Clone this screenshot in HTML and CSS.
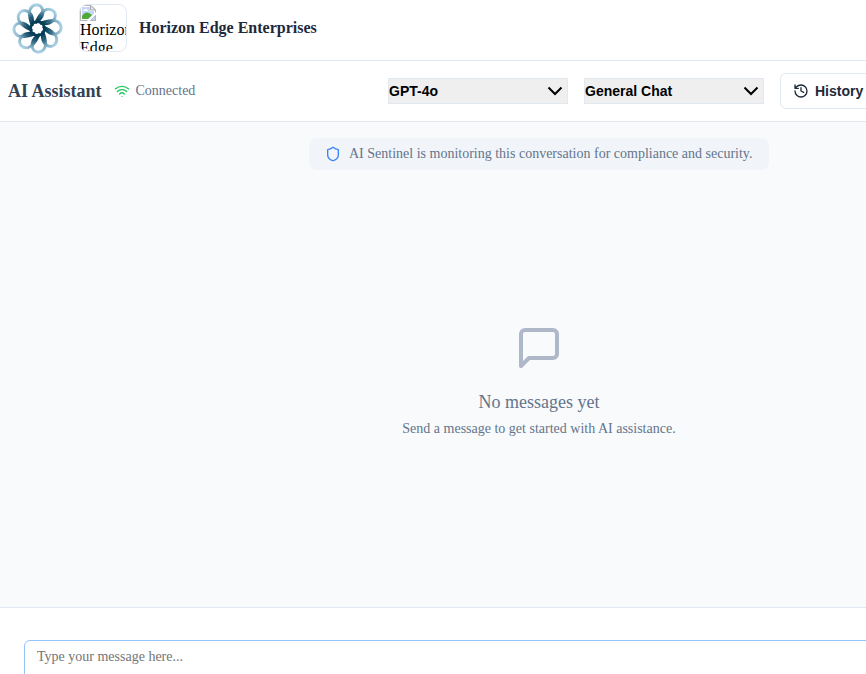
FILE: index.html
```html
<!DOCTYPE html>
<html lang="en">
<head>
<meta charset="utf-8">
<title>AI Assistant</title>
<link rel="stylesheet" href="styles.css">
</head>
<body>
<div class="app">
  <header class="brand-bar">
    <svg class="logo" viewBox="-26.5 -26.5 52 52" aria-hidden="true">
      <defs>
        <radialGradient id="petal" gradientUnits="userSpaceOnUse" cx="0" cy="0" r="25">
          <stop offset=".3" stop-color="#073e57"/>
          <stop offset=".52" stop-color="#286079"/>
          <stop offset=".78" stop-color="#82afc5"/>
          <stop offset="1" stop-color="#b4d9ea"/>
        </radialGradient>
        <path id="p" d="M-5.6 -3.5C-7.6 -9 -9.6 -15.5 -7 -20C-3.8 -25 2.6 -25 5 -19.5C6.8 -14.5 3.8 -9.5 -1 -6.4"/>
      </defs>
      <g fill="none" stroke="url(#petal)" stroke-width="2.9" stroke-linecap="round">
        <use href="#p"/><use href="#p" transform="rotate(45)"/><use href="#p" transform="rotate(90)"/><use href="#p" transform="rotate(135)"/>
        <use href="#p" transform="rotate(180)"/><use href="#p" transform="rotate(225)"/><use href="#p" transform="rotate(270)"/><use href="#p" transform="rotate(315)"/>
        <circle r="6.9" stroke="#073e57" stroke-width="2.6"/>
      </g>
    </svg>
    <div class="company-image">
      <svg width="16" height="16" viewBox="0 0 16 16" aria-hidden="true">
        <path d="M.5 .5H11L15.5 5V15.5H.5Z" fill="#fff" stroke="#b5b5b5"/>
        <path d="M2 2H10V6H14V9L9 14H2Z" fill="#c5d7f5"/>
        <path d="M3 6Q3 4 5 4.5Q7 3 8 6Z" fill="#fff"/>
        <path d="M2 14V11Q5 6 9 8L12 10L8 14Z" fill="#50a936"/>
        <path d="M10.5 .5V5H15.5Z" fill="#eee" stroke="#aaa"/>
        <path d="M7 16L16 7V10L10 16Z" fill="#fff"/>
        <path d="M10.5 15.5H15.5V10.5Z" fill="#c5d7f5" stroke="#b5b5b5"/>
      </svg>
      <span>Horizon Edge</span>
    </div>
    <div class="company-name">Horizon Edge Enterprises</div>
  </header>
  <div class="toolbar">
    <h1>AI Assistant</h1>
    <div class="status">
      <svg class="line-icon" width="16" height="16" viewBox="0 0 24 24"><path d="M12 20h.01M2 8.82a15 15 0 0 1 20 0M5 12.859a10 10 0 0 1 14 0M8.5 16.429a5 5 0 0 1 7 0"/></svg>
      <span>Connected</span>
    </div>
    <div class="select"><span>GPT-4o</span><svg width="16" height="16" viewBox="0 0 16 16"><path d="M1.5 4.5L8 11L14.5 4.5"/></svg></div>
    <div class="select"><span>General Chat</span><svg width="16" height="16" viewBox="0 0 16 16"><path d="M1.5 4.5L8 11L14.5 4.5"/></svg></div>
    <button class="history"><svg class="line-icon" width="16" height="16" viewBox="0 0 24 24"><path d="M3 12a9 9 0 1 0 9-9 9.75 9.75 0 0 0-6.74 2.74L3 8M3 3v5h5M12 7v5l4 2"/></svg>History</button>
  </div>
  <main class="chat">
    <div class="notice">
      <svg class="line-icon" width="16" height="16" viewBox="0 0 24 24"><path d="M20 13c0 5-3.5 7.5-7.66 8.95a1 1 0 0 1-.67-.01C7.5 20.5 4 18 4 13V6a1 1 0 0 1 1-1c2 0 4.5-1.2 6.24-2.72a1.17 1.17 0 0 1 1.52 0C14.51 3.81 17 5 19 5a1 1 0 0 1 1 1z"/></svg>
      <span>AI Sentinel is monitoring this conversation for compliance and security.</span>
    </div>
    <div class="empty">
      <svg class="line-icon" width="48" height="48" viewBox="0 0 24 24"><path d="M21 15a2 2 0 0 1-2 2H7l-4 4V5a2 2 0 0 1 2-2h14a2 2 0 0 1 2 2z"/></svg>
      <h2>No messages yet</h2>
      <p>Send a message to get started with AI assistance.</p>
    </div>
  </main>
  <footer class="composer">
    <textarea placeholder="Type your message here..."></textarea>
  </footer>
</div>
</body>
</html>
```
FILE: styles.css
```css
* { box-sizing: border-box; }
html, body { margin: 0; height: 100%; overflow: hidden; }
body { background: #fff; font-family: "Liberation Serif", serif; }
h1, h2, p { margin: 0; }
.app { width: 1078px; height: 760px; display: flex; flex-direction: column; }
.line-icon { flex: none; fill: none; stroke: currentColor; stroke-width: 2; stroke-linecap: round; stroke-linejoin: round; }

.brand-bar { height: 61px; flex: none; display: flex; align-items: flex-start; border-bottom: 1px solid #e2e8f0; padding: 2px 0 0 11px; }
.logo { width: 52px; height: 52px; flex: none; }
.company-image { width: 48px; height: 48px; margin: 2px 12px 0 16px; border: 1px solid #e2e8f0; border-radius: 8px; overflow: hidden; font-size: 16px; line-height: 18px; color: #000; }
.company-image svg { display: block; }
.company-image span { display: block; }
.company-name { margin-top: 14px; font-size: 16px; line-height: 24px; font-weight: 700; color: #1e293b; }

.toolbar { height: 61px; flex: none; display: flex; align-items: center; padding-left: 8px; border-bottom: 1px solid #e2e8f0; }
.toolbar h1 { width: 106px; font-size: 18px; line-height: 28px; color: #334155; }
.status { width: 274px; display: flex; align-items: center; gap: 5.5px; font-size: 14px; line-height: 20px; color: #64748b; }
.status .line-icon { color: #22c55e; }
.select { width: 180px; height: 26px; flex: none; margin-right: 16px; padding: 0 4px 0 0; display: flex; align-items: center; justify-content: space-between; background: #efefef; border: 1px solid #e2e8f0; font: 700 14px/20px "Liberation Sans", sans-serif; color: #000; }
.select svg { fill: none; stroke: #000; stroke-width: 2; }
.history { width: 110px; height: 36px; flex: none; padding: 0 12px; display: flex; align-items: center; gap: 6px; background: #fff; border: 1px solid #e2e8f0; border-radius: 6px; font: 700 14px/20px "Liberation Sans", sans-serif; color: #1e293b; }

.chat { height: 485px; flex: none; display: flex; flex-direction: column; align-items: center; padding-top: 16px; background: #f8fafc; }
.notice { width: 460px; height: 32px; display: flex; align-items: center; gap: 8px; padding: 0 16px; border-radius: 8px; background: #f1f5f9; color: #64748b; font-size: 14px; line-height: 20px; white-space: nowrap; }
.notice .line-icon { color: #3b82f6; }
.empty { margin-top: 154px; display: flex; flex-direction: column; align-items: center; color: #64748b; }
.empty .line-icon { color: #aeb8c9; }
.empty h2 { margin-top: 16px; font-size: 18px; line-height: 28px; font-weight: 400; }
.empty p { margin-top: 3px; font-size: 14px; line-height: 20px; }

.composer { flex: 1; padding: 32px 24px; border-top: 1px solid #e2e8f0; background: #fff; }
.composer textarea { display: block; width: 100%; height: 80px; padding: 6px 12px; border: 1px solid #93c5fd; border-radius: 6px; outline: 0; resize: none; font: 14px/20px "Liberation Serif", serif; }
.composer textarea::placeholder { color: #757575; }
```
